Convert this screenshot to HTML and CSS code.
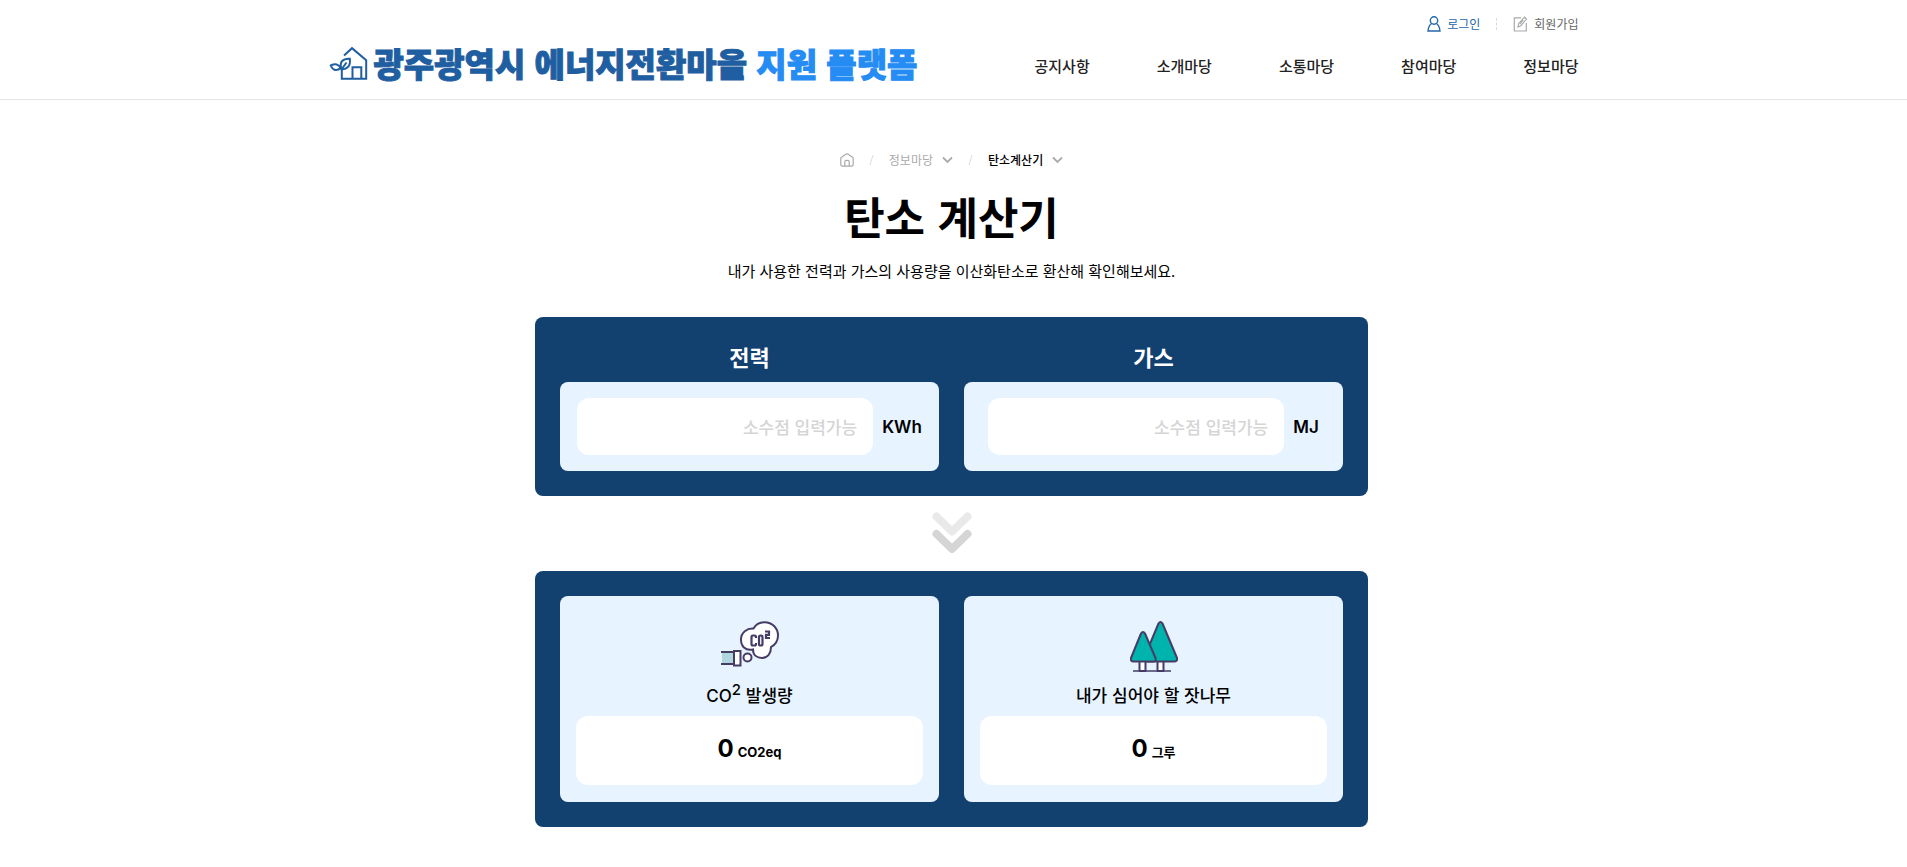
FILE: index.html
```html
<!DOCTYPE html>
<html lang="ko">
<head>
<meta charset="utf-8">
<title>탄소 계산기</title>
<link rel="stylesheet" href="styles.css">
</head>
<body>
<header class="header">
  <div class="header-inner">
    <a class="logo" href="#">
      <svg class="logo-icon" viewBox="0 0 40 34" fill="none" stroke="#1f5fa1" stroke-width="2">
        <path d="M15 9.500 23 2.200 37.200 14.200V32.800H12.800V22.500M23.500 32.800V21.200h8.800V32.800M17 32.800h6"/>
        <path d="M12.500 23.500C10 15.500 14 12.500 20.800 12.800 21.800 20 18.500 23 12.500 23.500ZM11.500 22C10 18 6 17.500 1.800 19.500 3.800 24.500 8 25.500 11.500 22ZM17.500 16.500 12.800 23"/>
      </svg>
      <span class="logo-text">광주광역시 에너지전환마을 <span class="logo-accent">지원 플랫폼</span></span>
    </a>
    <div class="header-right">
      <div class="user-menu">
        <a class="user-link login" href="#">
          <svg width="14" height="16" viewBox="0 0 14 16" fill="none" stroke="currentColor" stroke-width="1.400"><circle cx="7" cy="4.500" r="3.700"/><path d="M4.500 7.500C2.500 9 1.300 11.500 1 15h12c-.3-3.500-1.500-6-3.500-7.500"/></svg>
          로그인
        </a>
        <span class="divider"></span>
        <a class="user-link" href="#">
          <svg width="15" height="16" viewBox="0 0 15 16" fill="none" stroke="#aaa" stroke-width="1.200"><path d="M8 1.800H1.300V15h12V7"/><path d="m5 11 .6-3.300L11.500 1.200l2 1.800L7.800 9.700 5 11Zm5.200-7L7 8"/></svg>
          회원가입
        </a>
      </div>
      <nav class="nav">
        <a href="#">공지사항</a>
        <a href="#">소개마당</a>
        <a href="#">소통마당</a>
        <a href="#">참여마당</a>
        <a href="#">정보마당</a>
      </nav>
    </div>
  </div>
</header>
<main class="main">
  <nav class="crumbs" aria-label="현재 위치">
    <a class="crumb-home" href="#" aria-label="홈"><svg width="14" height="14" viewBox="0 0 14 14" fill="none" stroke="#aaa" stroke-width="1.200"><path d="M.8 5.600Q.8 4.800 1.500 4.300L5.800 1.200Q7 .5 8.200 1.200L12.500 4.300Q13.200 4.800 13.200 5.600v6q0 1.600-1.600 1.600H2.400Q.8 13.200.8 11.600ZM4.800 13V8.800q0-1.500 1.500-1.500h1.400q1.500 0 1.500 1.500V13"/></svg></a>
    <svg class="slash" width="5" height="12" viewBox="0 0 5 12"><path d="M4 1 1 11" stroke="#ddd"/></svg>
    <button class="crumb" type="button">정보마당 <svg width="11" height="8" viewBox="0 0 11 8"><path d="m1 1.500 4.500 4.500L10 1.500" fill="none" stroke="#aaa" stroke-width="1.800"/></svg></button>
    <svg class="slash" width="5" height="12" viewBox="0 0 5 12"><path d="M4 1 1 11" stroke="#ddd"/></svg>
    <button class="crumb current" type="button">탄소계산기 <svg width="11" height="8" viewBox="0 0 11 8"><path d="m1 1.500 4.500 4.500L10 1.500" fill="none" stroke="#aaa" stroke-width="1.800"/></svg></button>
  </nav>
  <h1 class="title">탄소 계산기</h1>
  <p class="subtitle">내가 사용한 전력과 가스의 사용량을 이산화탄소로 환산해 확인해보세요.</p>

  <form class="panel">
    <div class="column">
      <label class="field-title" for="power">전력</label>
      <div class="card input-card">
        <input class="amount" id="power" type="text" inputmode="decimal" placeholder="소수점 입력가능">
        <span class="unit">KWh</span>
      </div>
    </div>
    <div class="column">
      <label class="field-title" for="gas">가스</label>
      <div class="card input-card">
        <input class="amount" id="gas" type="text" inputmode="decimal" placeholder="소수점 입력가능">
        <span class="unit">MJ</span>
      </div>
    </div>
  </form>

  <svg class="arrows" width="40" height="43" viewBox="0 0 40 43" fill="none" stroke-width="8" stroke-linecap="round" stroke-linejoin="round"><path d="m4.500 4.500 15.500 15 15.500-15" stroke="#e9e9e9"/><path d="m4.500 22 15.500 15 15.500-15" stroke="#d5d5d5"/></svg>

  <section class="panel">
    <div class="card result-card">
      <svg class="result-icon" width="58" height="52" viewBox="0 0 58 52" fill="none" stroke="#463c66" stroke-width="2">
        <path d="M32 28.500C24 30 20 25 20 18.500 20 11.500 26 7 32.500 7.500 35 3 39 1.200 43.500 1.200 51 1.200 57 7 57 14.500c0 5-2.500 9-7 11.500 0 6-3 11-9 11-5 0-9-3-9-8.500Z" fill="#fff"/>
        <circle cx="26.500" cy="36.500" r="4" fill="#fff"/>
        <path d="M1 31h12v12H1Z" fill="#b0d6df" stroke="none"/>
        <path d="M0 31h13M0 43h13"/>
        <path d="M13 30h6.500v14.500H13Z" fill="#fff"/>
        <path d="M35 17v-1q0-1.500-1.500-1.500H32q-1.500 0-1.500 1.500v7q0 1.500 1.500 1.500h1.500Q35 24.500 35 23v-1M39.500 14.500h.5q1.500 0 1.500 1.500v7q0 1.500-1.500 1.500h-.5q-1.500 0-1.500-1.500v-7q0-1.500 1.500-1.500ZM44 10.500h4v3.300h-3v3.200h4" stroke-width="2.200"/>
      </svg>
      <h2 class="result-title"><span class="latin">CO<sup>2</sup></span> 발생량</h2>
      <p class="result"><strong>0</strong> <span class="result-unit latin">CO2eq</span></p>
    </div>
    <div class="card result-card">
      <svg class="result-icon" width="48" height="52" viewBox="0 0 48 52" stroke="#463c66" stroke-width="2" stroke-linejoin="round">
        <path d="M9.500 40h6v10h-6ZM27.500 40h6v10h-6Z" fill="#fff"/>
        <path d="M3 50h38" stroke-width="1.500"/>
        <path d="M28.500 2.500Q30.500-.5 32.500 2.500L47 37q.7 3.500-3 3.500H17Q13 40.500 14.500 36Z" fill="#00b4ae"/>
        <path d="M11 12.500q2-3 4 0L25.500 37q.7 3.500-2 3.500H3.500Q.2 40.500 1 37Z" fill="#00b4ae"/>
      </svg>
      <h2 class="result-title">내가 심어야 할 잣나무</h2>
      <p class="result"><strong>0</strong> <span class="result-unit">그루</span></p>
    </div>
  </section>
</main>
</body>
</html>
```
FILE: styles.css
```css
* { box-sizing: border-box; }

body {
  margin: 0;
  background: #fff;
  color: #000;
  font-family: "Noto Sans CJK KR", sans-serif;
  font-size: 15px;
}

a { color: inherit; text-decoration: none; }
svg { flex: none; }

.header { border-bottom: 1px solid #e5e5e5; }

.header-inner {
  display: flex;
  justify-content: space-between;
  max-width: 1250px;
  margin: 0 auto;
  padding: 14px 0 19px;
}

.logo {
  display: flex;
  align-items: flex-end;
  gap: 5px;
  white-space: nowrap;
}

.logo-icon { width: 40px; height: 34px; }

.logo-text {
  color: #1f5fa1;
  font-size: 33px;
  font-weight: 900;
  line-height: 34px;
  -webkit-text-stroke: 1px;
}

.logo-accent { color: #248cf2; }

.header-right {
  display: flex;
  flex-direction: column;
  align-items: flex-end;
  gap: 18px;
}

.user-menu {
  display: flex;
  align-items: center;
  gap: 16px;
  color: #666;
  font-size: 12px;
  line-height: 20px;
}

.user-link { display: flex; align-items: center; gap: 6px; }
.login { color: #2468a8; }
.divider { height: 12px; border-left: 1px dashed #ddd; }

.nav {
  display: flex;
  gap: 67px;
  color: #222;
  font-weight: 500;
  line-height: 28px;
}

.main {
  display: flex;
  flex-direction: column;
  align-items: center;
  padding: 50px 4px 40px 0;
}

.crumbs { display: flex; align-items: center; gap: 15px; }
.crumb-home { display: flex; }

.crumb {
  display: flex;
  align-items: center;
  gap: 9px;
  padding: 0;
  border: 0;
  background: none;
  color: #aaa;
  font: 12px/20px "Noto Sans CJK KR", sans-serif;
}

.current { color: #000; font-weight: 500; }

.title {
  margin: 16px 0 15px;
  font-size: 44px;
  font-weight: 600;
  line-height: 60px;
}

.subtitle { margin: 0 0 36px; line-height: 20px; }

.panel {
  display: grid;
  grid-template-columns: 1fr 1fr;
  gap: 25px;
  width: 100%;
  max-width: 833px;
  padding: 25px;
  border-radius: 8px;
  background: #12406f;
}

.field-title {
  display: block;
  margin-bottom: 12px;
  color: #fff;
  font-size: 22px;
  font-weight: 700;
  line-height: 28px;
  text-align: center;
}

.card { border-radius: 8px; background: #e7f3ff; }

.input-card {
  display: flex;
  align-items: center;
  justify-content: center;
  gap: 9px;
  padding: 16px;
}

.amount {
  width: 296px;
  min-width: 0;
  height: 57px;
  padding: 0 16px;
  border: 0;
  border-radius: 12px;
  background: #fff;
  font: 500 17px "Noto Sans CJK KR", sans-serif;
  text-align: right;
}

.amount::placeholder { color: #d5d5d5; }

.unit {
  font-family: Inter, sans-serif;
  font-size: 17px;
  font-weight: 600;
}

.arrows { margin: 16px 0; }

.result-card { padding: 25px 16px 17px; text-align: center; }
.result-icon { display: block; margin: 0 auto; }

.result-title {
  margin: 8px 0;
  font-size: 17px;
  font-weight: 500;
  line-height: 27px;
}

.latin { font-family: Inter, sans-serif; line-height: 20px; }
.result-title sup { font-size: 15px; line-height: 0; }

.result {
  display: flex;
  align-items: baseline;
  justify-content: center;
  gap: 4px;
  margin: 0;
  padding: 18px 16px 21px;
  border-radius: 12px;
  background: #fff;
  font-size: 13px;
  line-height: 30px;
}

.result strong {
  font-family: Inter, sans-serif;
  font-size: 24px;
  font-weight: 700;
}

.result-unit { font-weight: 700; line-height: 20px; }
```
